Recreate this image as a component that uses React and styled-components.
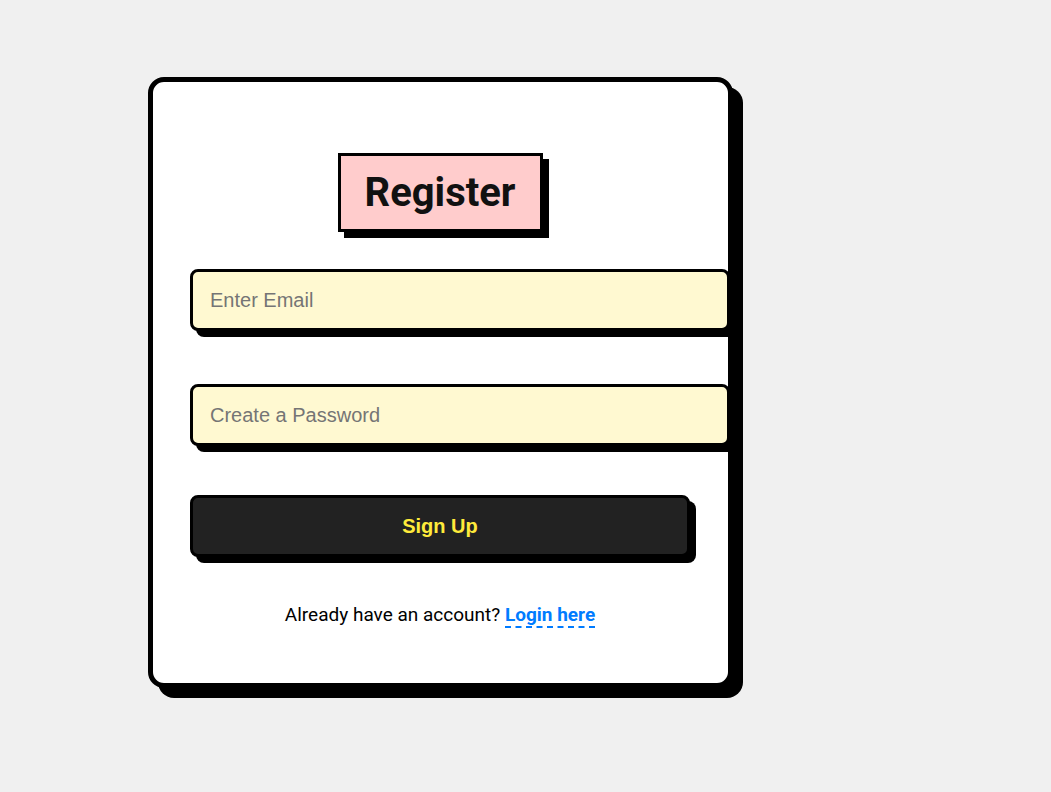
import React from "react";
import styled, { createGlobalStyle } from "styled-components";

const GlobalStyle = createGlobalStyle`
  html, body {
    margin: 0;
    padding: 0;
    background: #f0f0f0;
    font-family: Roboto, "Liberation Sans", sans-serif;
  }
  * { box-sizing: border-box; }
`;

const Page = styled.div`
  min-height: 792px;
  padding: 77px 0 0 148px;
`;

const Card = styled.form`
  width: 585px;
  background: #ffffff;
  border: 5px solid #000;
  border-radius: 16px;
  box-shadow: 10px 10px 0 #000;
  padding: 71px 38px 57px 37px;
  display: flex;
  flex-direction: column;
  align-items: flex-start;
`;

const Title = styled.h1`
  align-self: center;
  margin: 0 0 37px;
  padding: 13px 24px;
  background: #ffcccc;
  border: 3px solid #000;
  box-shadow: 6px 6px 0 #000;
  font-family: Roboto, sans-serif;
  font-weight: 700;
  font-size: 40px;
  line-height: normal;
  color: #111;
`;

const Input = styled.input`
  display: block;
  width: 540px;
  height: 62px;
  margin: 0 0 ${(p) => p.$gap}px;
  padding: 0 17px;
  background: #fff9d1;
  border: 3px solid #000;
  border-radius: 8px;
  box-shadow: 6px 6px 0 #000;
  font-family: "Liberation Sans", Arial, sans-serif;
  font-size: 20px;
  color: #222;
  outline: none;
  &::placeholder { color: #757575; opacity: 1; }
`;

const Button = styled.button`
  display: block;
  width: 100%;
  height: 62px;
  margin: 0 0 46px;
  background: #222222;
  border: 3px solid #000;
  border-radius: 8px;
  box-shadow: 6px 6px 0 #000;
  font-family: "Liberation Sans", Arial, sans-serif;
  font-weight: 700;
  font-size: 20px;
  color: #ffeb3b;
  cursor: pointer;
`;

const Footer = styled.p`
  align-self: stretch;
  margin: 0;
  text-align: center;
  font-family: Roboto, sans-serif;
  font-size: 19px;
  line-height: normal;
  color: #000;
`;

const LoginLink = styled.a`
  color: #007bff;
  font-weight: 700;
  text-decoration: none;
  border-bottom: 2px dashed #007bff;
`;

export default function App() {
  return (
    <>
      <GlobalStyle />
      <Page>
        <Card onSubmit={(e) => e.preventDefault()}>
          <Title>Register</Title>
          <Input type="email" placeholder="Enter Email" $gap={53} />
          <Input type="password" placeholder="Create a Password" $gap={49} />
          <Button type="submit">Sign Up</Button>
          <Footer>
            Already have an account? <LoginLink href="#">Login here</LoginLink>
          </Footer>
        </Card>
      </Page>
    </>
  );
}
